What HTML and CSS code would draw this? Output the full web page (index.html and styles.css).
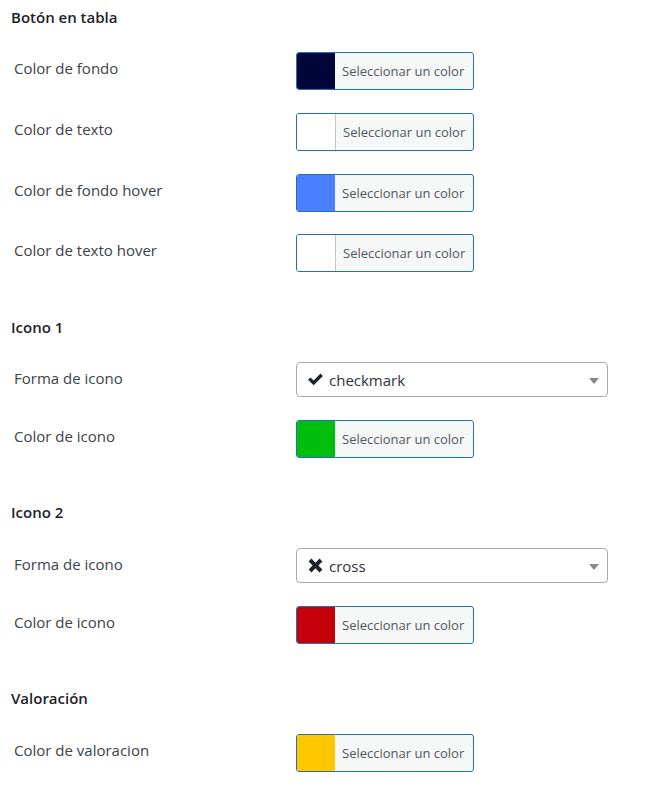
FILE: index.html
```html
<!DOCTYPE html>
<html lang="es">
<head>
<meta charset="utf-8">
<link rel="stylesheet" href="styles.css">
</head>
<body>
<div class="page">
  <section class="group">
    <h3 class="group-title">Botón en tabla</h3>
    <div class="row"><div class="label">Color de fondo</div><div class="ctl"><button class="picker"><span class="swatch" style="background:#000638"></span><span class="ptext">Seleccionar un color</span></button></div></div>
    <div class="row"><div class="label">Color de texto</div><div class="ctl"><button class="picker"><span class="swatch swatch-light" style="background:#ffffff"></span><span class="ptext">Seleccionar un color</span></button></div></div>
    <div class="row"><div class="label">Color de fondo hover</div><div class="ctl"><button class="picker"><span class="swatch" style="background:#4a80ff"></span><span class="ptext">Seleccionar un color</span></button></div></div>
    <div class="row"><div class="label">Color de texto hover</div><div class="ctl"><button class="picker"><span class="swatch swatch-light" style="background:#ffffff"></span><span class="ptext">Seleccionar un color</span></button></div></div>
  </section>

  <section class="group">
    <h3 class="group-title">Icono 1</h3>
    <div class="row"><div class="label">Forma de icono</div><div class="ctl">
      <div class="select">
        <svg class="sel-icon" width="17" height="15" viewBox="0 0 16 14"><path d="M1 7.2 L3.3 5 L6.2 7.9 L12.7 1.4 L15 3.7 L6.2 12.5 Z" fill="#1d2327"/></svg>
        <span class="sel-text">checkmark</span>
        <span class="caret"></span>
      </div>
    </div></div>
    <div class="row"><div class="label">Color de icono</div><div class="ctl"><button class="picker"><span class="swatch" style="background:#00be0c"></span><span class="ptext">Seleccionar un color</span></button></div></div>
  </section>

  <section class="group">
    <h3 class="group-title">Icono 2</h3>
    <div class="row"><div class="label">Forma de icono</div><div class="ctl">
      <div class="select">
        <svg class="sel-icon" width="17" height="17" viewBox="0 0 16 16"><path d="M1.5 4.2 L4.2 1.5 L8 5.3 L11.8 1.5 L14.5 4.2 L10.7 8 L14.5 11.8 L11.8 14.5 L8 10.7 L4.2 14.5 L1.5 11.8 L5.3 8 Z" fill="#1d2327"/></svg>
        <span class="sel-text">cross</span>
        <span class="caret"></span>
      </div>
    </div></div>
    <div class="row"><div class="label">Color de icono</div><div class="ctl"><button class="picker"><span class="swatch" style="background:#c4000a"></span><span class="ptext">Seleccionar un color</span></button></div></div>
  </section>

  <section class="group">
    <h3 class="group-title">Valoración</h3>
    <div class="row"><div class="label">Color de valoracion</div><div class="ctl"><button class="picker"><span class="swatch" style="background:#ffc700"></span><span class="ptext">Seleccionar un color</span></button></div></div>
  </section>
</div>
</body>
</html>
```

FILE: styles.css
```css
html, body {
  margin: 0;
  padding: 0;
  background: #ffffff;
}

body {
  font-family: "Open Sans", "Noto Sans", "Liberation Sans", sans-serif;
  color: #3c434a;
}

.page {
  padding: 6.5px 0 0 0;
  width: 657px;
}

.group {
  margin-bottom: 33px;
}

.group-title {
  margin: 0 0 14.5px 11px;
  font-size: 15px;
  line-height: 20px;
  font-weight: 600;
  color: #1d2327;
}

.row {
  display: flex;
  align-items: flex-start;
  padding: 11.33px 0;
}

.label {
  width: 296px;
  flex: none;
  padding-left: 14px;
  padding-top: 6px;
  box-sizing: border-box;
  font-size: 15px;
  line-height: 20px;
  color: #3c434a;
}

.ctl {
  display: flex;
}

.picker {
  display: flex;
  align-items: stretch;
  width: 178px;
  height: 38px;
  padding: 0;
  margin: 0;
  border: 1px solid #2271b1;
  border-radius: 3px;
  background: #f6f7f7;
  overflow: hidden;
  font: inherit;
  cursor: pointer;
}

.swatch {
  width: 38px;
  flex: none;
}

.swatch-light {
  border-right: 1px solid #c3c4c7;
}

.ptext {
  flex: 1;
  display: flex;
  align-items: center;
  padding-left: 7px;
  font-family: "Open Sans", "Noto Sans", sans-serif;
  font-size: 13px;
  color: #50575e;
  white-space: nowrap;
}

.select {
  position: relative;
  display: flex;
  align-items: center;
  width: 312px;
  height: 35px;
  box-sizing: border-box;
  border: 1px solid #a7aaad;
  border-radius: 4px;
  padding-left: 10px;
  background: #fff;
}

.sel-icon {
  margin-right: 5px;
  flex: none;
}

.sel-text {
  font-size: 15px;
  color: #2c3338;
}

.caret {
  position: absolute;
  right: 8px;
  top: 15px;
  width: 0;
  height: 0;
  border-left: 5px solid transparent;
  border-right: 5px solid transparent;
  border-top: 6px solid #888888;
}
```
